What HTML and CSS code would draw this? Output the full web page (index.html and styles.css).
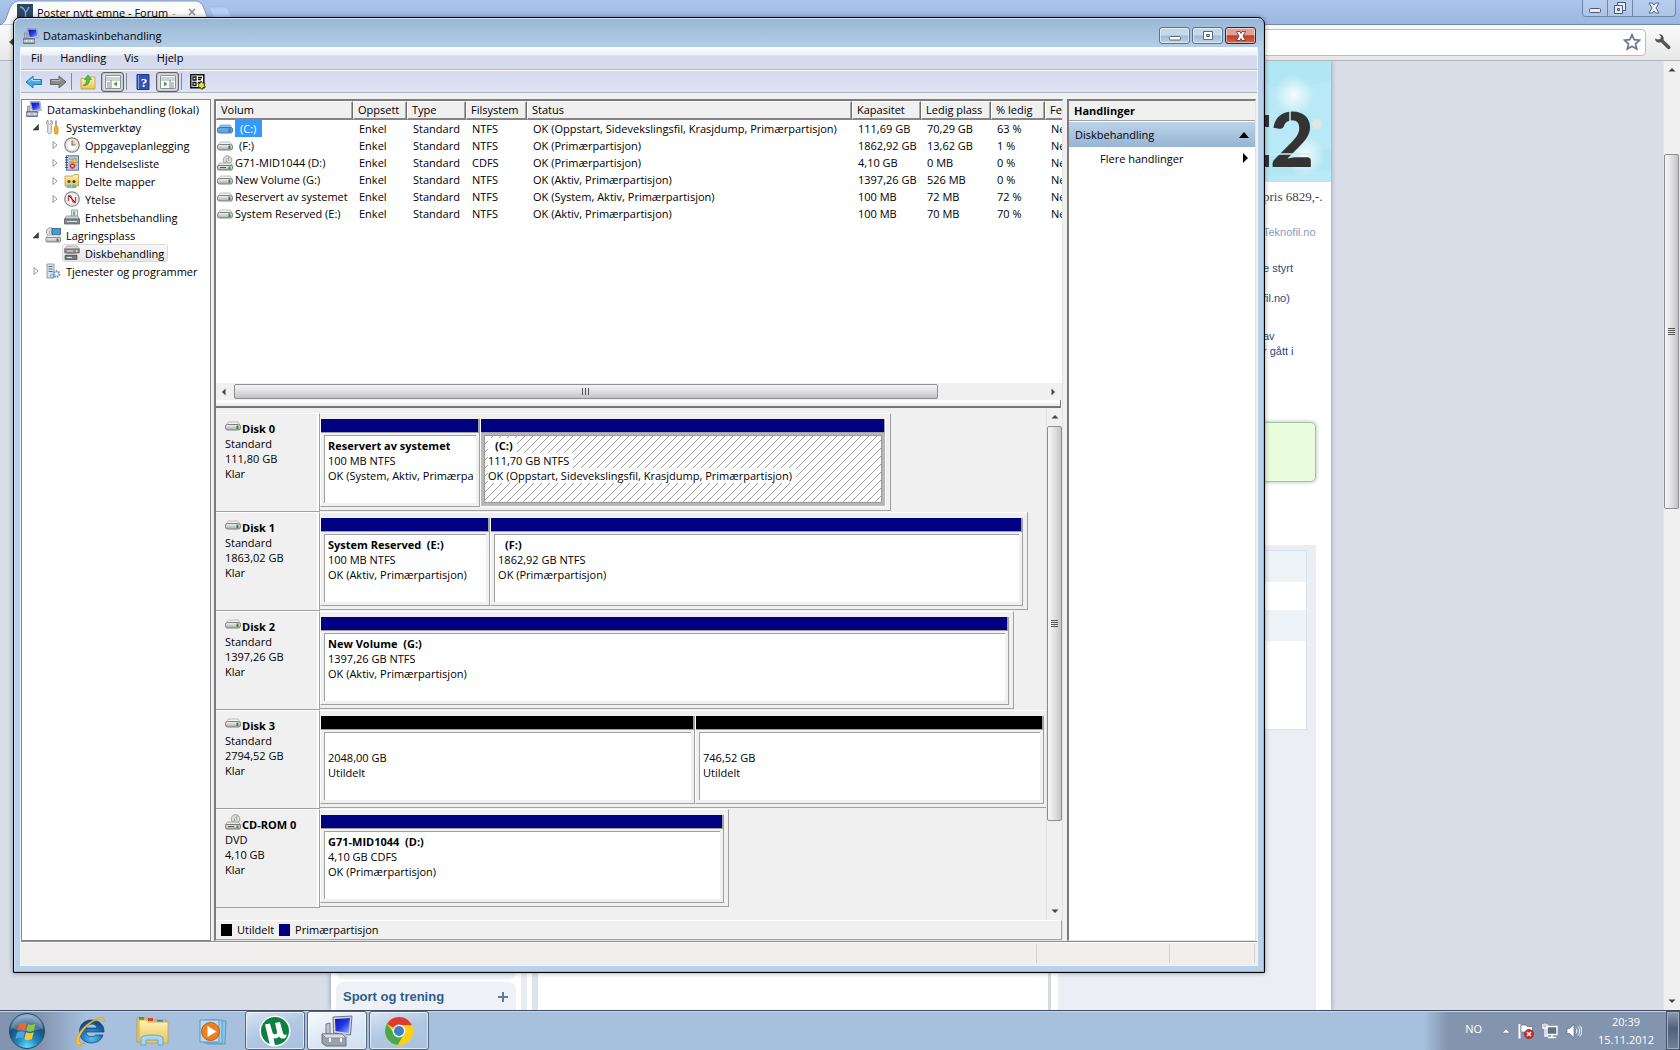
FILE: index.html
```html
<!DOCTYPE html>
<html lang="no">
<head>
    <meta charset="UTF-8">
    <meta name="viewport" content="width=device-width, initial-scale=1.0">
    <title>Datamaskinbehandling</title>
    <link rel="stylesheet" href="styles.css">
</head>
<body>

<!-- shared icons -->
<svg class="sprite" aria-hidden="true">
    <defs>
        <linearGradient id="g-metal" x1="0" y1="0" x2="0" y2="1"><stop offset="0" stop-color="#f4f4f4"/><stop offset="1" stop-color="#a9a9a9"/></linearGradient>
        <linearGradient id="g-screen" x1="0" y1="0" x2="1" y2="1"><stop offset="0" stop-color="#0a12b8"/><stop offset="0.5" stop-color="#2338e0"/><stop offset="1" stop-color="#9fb4ff"/></linearGradient>
        <linearGradient id="g-folder" x1="0" y1="0" x2="0" y2="1"><stop offset="0" stop-color="#fdf3b5"/><stop offset="1" stop-color="#e9c45c"/></linearGradient>
        <radialGradient id="g-orb" cx="0.5" cy="0.95" r="0.9"><stop offset="0" stop-color="#5fe0fb"/><stop offset="0.35" stop-color="#1d86bd"/><stop offset="0.7" stop-color="#1b4d7d"/><stop offset="1" stop-color="#86a9c6"/></radialGradient>
        <radialGradient id="g-ie" cx="0.5" cy="0.8" r="0.8"><stop offset="0" stop-color="#4fc4f5"/><stop offset="0.6" stop-color="#1668b5"/><stop offset="1" stop-color="#12407e"/></radialGradient>
    </defs>
    <symbol id="i-drive" viewBox="0 0 16 16">
        <path d="M3.500 4h9.500l2.500 4H.5z" fill="#f1f2f3" stroke="#a8a8a8" stroke-width=".7"/>
        <rect x=".5" y="6.500" width="15" height="5.500" rx="2" fill="url(#g-metal)" stroke="#808080"/>
        <path d="M12.500 7.500v3.500" stroke="#2f8c2f" stroke-width="2"/>
    </symbol>
    <symbol id="i-drive-sel" viewBox="0 0 16 16">
        <path d="M3.500 4h9.500l2.500 4H.5z" fill="#8fc0f0" stroke="#5c9ad6" stroke-width=".7"/>
        <rect x=".5" y="6.500" width="15" height="5.500" rx="2" fill="#6aa5de" stroke="#3b77b8"/>
        <path d="M12.500 7.500v3.500" stroke="#2a7a9c" stroke-width="2"/>
    </symbol>
    <symbol id="i-cd" viewBox="0 0 16 16">
        <circle cx="10.500" cy="5" r="4.300" fill="#dcdcdc" stroke="#8f8f8f" stroke-width=".8"/>
        <path d="M10.500 5l2-3.500M10.500 5l-2 3" stroke="#7bb77b" stroke-width="1"/>
        <circle cx="10.500" cy="5" r="1.200" fill="#fff" stroke="#888" stroke-width=".6"/>
        <path d="M2.500 8h11l2 3H.5z" fill="#e9ebec" stroke="#8a8a8a" stroke-width=".7"/>
        <rect x=".5" y="10.500" width="15" height="4.500" rx="1.500" fill="url(#g-metal)" stroke="#777"/>
        <path d="M3 12.500h6" stroke="#555"/><path d="M12.500 11.500v2.500" stroke="#2f9c2f" stroke-width="2"/>
    </symbol>
    <symbol id="i-computer" viewBox="0 0 16 16">
        <path d="M4 .5h10l1.300 9-9 1z" fill="#d9dde3" stroke="#8b93a0" stroke-width=".7"/>
        <path d="M5 1.500h8.300l1 7-7.500.7z" fill="url(#g-screen)"/>
        <path d="M1.500 5h2.500v6H1.500z" fill="#b9bec5" stroke="#6c7480" stroke-width=".6"/>
        <path d="M8 10.500h5v1.500H8z" fill="#bfc5ce"/>
        <path d="M.5 10.500h11v5H.5z" fill="#9aa1a9" stroke="#5d646d" stroke-width=".8"/>
        <path d="M.5 13h11M3.500 12v2M8.500 12v2" stroke="#eee"/>
    </symbol>
    <symbol id="i-tools" viewBox="0 0 16 16">
        <path d="M3 1v3l1.500 1.500L6 4V1c2 1 2 4 .3 5.300V13c0 2.500-3.600 2.500-3.600 0V6.300C1 5 1 2 3 1z" fill="#e6e6e6" stroke="#8c8c8c" stroke-width=".8"/>
        <path d="M11 1.500v6" stroke="#8c8c8c" stroke-width="1.500"/>
        <rect x="9.500" y="7.500" width="3.500" height="7.500" rx="1.200" fill="#f7b52a" stroke="#c47a00" stroke-width=".7"/>
    </symbol>
    <symbol id="i-clock" viewBox="0 0 16 16">
        <circle cx="8" cy="8" r="7.200" fill="#efefef" stroke="#858585" stroke-width="1.300"/>
        <circle cx="8" cy="8" r="5.300" fill="#fff" stroke="#c5c5c5" stroke-width=".6"/>
        <path d="M8 3v5h4v-1A4.500 4.500 0 0 0 8 3z" fill="#f5cf7a"/><path d="M8 3.500V8h3.500" fill="none" stroke="#666" stroke-width="1.100"/>
    </symbol>
    <symbol id="i-event" viewBox="0 0 16 16">
        <rect x="2.500" y=".8" width="12" height="14.400" fill="#b9cdea" stroke="#4d6a95" stroke-width=".9"/>
        <path d="M5 4h8M5 7h8M5 10h8" stroke="#7c98c4"/><path d="M1 2.500h3M1 5h3M1 7.500h3M1 10h3M1 12.500h3" stroke="#555"/>
        <path d="M10.500 2.500l3 5h-6z" fill="#f9cf2b" stroke="#a87a00" stroke-width=".5"/><circle cx="8.500" cy="11" r="2.800" fill="#d82e2e"/>
        <path d="M7.300 9.800l2.400 2.400M9.700 9.800l-2.400 2.400" stroke="#fff" stroke-width=".9"/>
    </symbol>
    <symbol id="i-shared" viewBox="0 0 16 16">
        <path d="M1 3h8l1-1.500h4.500V13H1z" fill="url(#g-folder)" stroke="#bf9a3c" stroke-width=".8"/>
        <circle cx="5" cy="8.500" r="1.600" fill="#6b4a2a"/><path d="M2.500 15c0-5 5-5 5 0z" fill="#6fb9de"/>
        <circle cx="10" cy="8.500" r="1.600" fill="#53361d"/><path d="M7.500 15c0-5 5-5 5 0z" fill="#6fc08a"/>
    </symbol>
    <symbol id="i-perf" viewBox="0 0 16 16">
        <circle cx="8" cy="8" r="7.200" fill="#fff" stroke="#8a8a8a" stroke-width="1.300"/>
        <circle cx="8" cy="8" r="5.300" fill="none" stroke="#cfcfcf" stroke-width=".7"/>
        <path d="M4.500 10V6.500C4.500 4 7 4 7.500 6.500L8.500 9.500C9 12 11.500 12 11.500 9.500V6" fill="none" stroke="#d43a3a" stroke-width="1.400"/><path d="M4.500 4.500l7 7" stroke="#333"/>
    </symbol>
    <symbol id="i-device" viewBox="0 0 16 16">
        <path d="M7.500 1h6v7h-6z" fill="#dfe6e2" stroke="#7e8a86" stroke-width=".7"/><path d="M10 2.500v4" stroke="#3aa657" stroke-width="1.500"/>
        <path d="M2.500 7h11l2 3H.5z" fill="#cfd4d8" stroke="#7a8086" stroke-width=".7"/>
        <path d="M.5 10h15v5H.5z" fill="#7f878f" stroke="#545b62" stroke-width=".8"/><path d="M3 12.500h10" stroke="#d5dade"/>
    </symbol>
    <symbol id="i-storage" viewBox="0 0 16 16">
        <circle cx="5.500" cy="5" r="4.200" fill="#e2e2e2" stroke="#8a8a8a" stroke-width=".8"/><circle cx="5.500" cy="5" r="1.200" fill="#fff" stroke="#777" stroke-width=".6"/>
        <rect x="7" y="1.500" width="8.500" height="6" fill="#3a9fd6" stroke="#285f8a" stroke-width=".8"/>
        <path d="M3 8h11l1.500 2.500H1z" fill="#eee" stroke="#999" stroke-width=".6"/>
        <rect x="1" y="10.500" width="14.500" height="4.500" rx="1" fill="url(#g-metal)" stroke="#777" stroke-width=".8"/><path d="M12.500 11.500v2.500" stroke="#2f9c2f" stroke-width="2"/>
    </symbol>
    <symbol id="i-disks" viewBox="0 0 16 16">
        <path d="M3 1h10l2.500 3H.5z" fill="#ddd" stroke="#888" stroke-width=".6"/><path d="M.7 4h14.600v4H.7z" fill="#8c8c8c" stroke="#5c5c5c" stroke-width=".7"/>
        <path d="M3.500 8.500h8l1.500 2H2z" fill="#ccc" stroke="#777" stroke-width=".6"/><path d="M1 10.500h12v4H1z" fill="#777" stroke="#4c4c4c" stroke-width=".7"/>
        <path d="M3 6h6M3 12.500h5" stroke="#e8e8e8"/><path d="M12.500 5v2" stroke="#d5e87a" stroke-width="1.500"/>
    </symbol>
    <symbol id="i-services" viewBox="0 0 16 16">
        <path d="M2 1h7v14H2z" fill="#dbe2e8" stroke="#7f8c98" stroke-width=".8"/><path d="M3.500 3.500h4M3.500 6h4M3.500 8.500h4" stroke="#5f6d79"/>
        <circle cx="11.500" cy="11" r="3" fill="#c5dcf0" stroke="#6d97bf" stroke-width="1.800" stroke-dasharray="1.600 1"/><circle cx="11.500" cy="11" r="1" fill="#fff"/>
        <circle cx="7" cy="13" r="1.700" fill="#c5dcf0" stroke="#6d97bf" stroke-width="1.200" stroke-dasharray="1 .7"/>
    </symbol>
    <symbol id="i-open" viewBox="0 0 8 8"><path d="M6.500 1.500v5.500h-5.500z" fill="#404040" stroke="#222" stroke-width=".5"/></symbol>
    <symbol id="i-closed" viewBox="0 0 8 8"><path d="M2 .5v7L6 4z" fill="#fff" stroke="#8a8a8a" stroke-width=".9"/></symbol>
    <symbol id="i-up" viewBox="0 0 8 8"><path d="M4 2l3.500 3.500h-7z" fill="#444"/></symbol>
    <symbol id="i-down" viewBox="0 0 8 8"><path d="M4 6l3.500-3.500h-7z" fill="#444"/></symbol>
    <symbol id="i-left" viewBox="0 0 8 8"><path d="M2 4l3.500-3.500v7z" fill="#444"/></symbol>
    <symbol id="i-right" viewBox="0 0 8 8"><path d="M6 4L2.500.5v7z" fill="#444"/></symbol>
</svg>

<div class="desktop">

    <!-- browser behind -->
    <div class="browser">
        <div class="tabstrip">
            <svg class="tab-shape" width="250" height="25" viewBox="0 0 250 25">
                <path d="M0 25c5-2 6-6 8-12 3-8 5-11 10-12h178c6 1 7 5 9 10 3 9 5 12 11 14z" fill="#fbfbfc" stroke="#6d86ad" stroke-width=".8"/>
                <path d="M209 7h16c4 0 5 10 8 12h-17c-3-1-5-8-7-12z" fill="#b4d0f6" stroke="#9fbde8"/>
            </svg>
            <div class="tab">
                <svg width="16" height="16" viewBox="0 0 16 16"><path d="M0 0h16v16H0z" fill="#2b4768"/><path d="M3 3c2 0 4 2 5 4s2 0 4-4M8.500 7v6" fill="none" stroke="#8ea5be" stroke-width="1.500"/></svg>
                <span>Poster nytt emne - Forum</span><span class="tab-more">-</span>
                <svg width="8" height="8" viewBox="0 0 8 8"><path d="M1 1l6 6M7 1L1 7" stroke="#8b8b8b" stroke-width="1.500"/></svg>
            </div>
            <div class="browser-buttons">
                <button type="button" aria-label="Minimer"><svg width="14" height="14" viewBox="0 0 14 14"><rect x="1.500" y="7.500" width="11" height="4" rx="1" fill="#e8eef8" stroke="#4b5a78"/></svg></button>
                <button type="button" aria-label="Gjenopprett"><svg width="14" height="14" viewBox="0 0 14 14"><path d="M4.500 1.500h8v8h-8z" fill="#e8eef8" stroke="#4b5a78"/><path d="M1.500 4.500h8v8h-8z" fill="#e8eef8" stroke="#4b5a78"/><path d="M4.500 7.500h2v2h-2z" fill="#9db5de" stroke="#4b5a78"/></svg></button>
                <button type="button" aria-label="Lukk"><svg width="14" height="14" viewBox="0 0 14 14"><path d="M2 2h3.500L7 4l1.500-2H12L9 7l3 5H8.500L7 10l-1.500 2H2l3-5z" fill="#e8eef8" stroke="#4b5a78" stroke-width=".9"/></svg></button>
            </div>
        </div>
        <div class="navbar">
            <svg width="14" height="14" viewBox="0 0 14 14"><path d="M14 1v12L7 7z" fill="#444"/></svg>
            <div class="address">
                <input type="text" aria-label="Adresse">
                <svg width="18" height="18" viewBox="0 0 18 18"><path d="M9 1.800l2.200 4.900 5.300.5-4 3.600 1.200 5.300L9 13.300l-4.700 2.800 1.200-5.300-4-3.600 5.300-.5z" fill="#fff" stroke="#6b7590" stroke-width="1.700"/></svg>
            </div>
            <svg width="18" height="18" viewBox="0 0 18 18"><path d="M1 5.500C1 8.500 4 10.500 7 9.300l6.500 6.500c1.800 1.200 4-.8 2.600-2.600L9.500 7C10.500 3.500 8 .8 4.800 1.200L7 3.500 6.300 6 3.800 6.500z" fill="#555"/></svg>
        </div>
        <div class="viewport">
            <div class="site">
                <div class="site-nav">
                    <div class="nav-box nav-box-cut"></div>
                    <div class="nav-box"><a href="#">Sport og trening</a><svg width="12" height="12" viewBox="0 0 12 12"><path d="M6 1v10M1 6h10" stroke="#5f7d9c" stroke-width="2"/></svg></div>
                </div>
                <div class="site-main"></div>
                <div class="site-aside">
                    <svg class="banner" viewBox="0 0 273 121" preserveAspectRatio="xMaxYMid slice">
                        <defs><radialGradient id="g-glow"><stop offset="0" stop-color="#f4fcfd"/><stop offset="1" stop-color="#f4fcfd" stop-opacity="0"/></radialGradient></defs>
                        <path d="M0 0h273v121H0z" fill="#b9e9f6"/>
                        <path d="M200 0h73v20l-40 8-33-6zM210 95l63-8v22l-63 6z" fill="#a5e0f1" opacity=".4"/>
                        <circle cx="236" cy="34" r="20" fill="url(#g-glow)"/><circle cx="247" cy="95" r="20" fill="url(#g-glow)"/>
                        <circle cx="259" cy="63" r="5" fill="#dfe6e2"/>
                        <path d="M200 54h11v12h-11zM200 94h11v12h-11z" fill="#333"/>
                        <text x="212" y="106" class="banner-text">2</text>
                        <path d="M232 48v14M212 93h40" stroke="#c6eef8" stroke-width="1.500"/>
                    </svg>
                    <div class="aside-text">
                        <p class="price">pris 6829,-.</p>
                        <p class="source">Teknofil.no</p>
                        <p class="news"><a href="#">e styrt</a></p>
                        <p class="news"><a href="#">fil.no)</a></p>
                        <p class="news news-two"><a href="#">av<br>r gått i</a></p>
                    </div>
                    <div class="notice"></div>
                    <div class="panel">
                        <div class="panel-list"><div class="stripe"></div><div class="plain"></div><div class="stripe"></div></div>
                    </div>
                </div>
            </div>
            <div class="vscroll page-scroll">
                <svg width="8" height="8"><use href="#i-up"/></svg>
                <div class="vtrack"><div class="vthumb"><i></i><i></i><i></i><i></i></div></div>
                <svg width="8" height="8"><use href="#i-down"/></svg>
            </div>
        </div>
    </div>

    <!-- computer management window -->
    <div class="window">
        <div class="titlebar">
            <svg width="16" height="16"><use href="#i-computer"/></svg>
            <h1>Datamaskinbehandling</h1>
            <div class="window-buttons">
                <button type="button" aria-label="Minimer"><svg width="14" height="12" viewBox="0 0 14 12"><rect x="1.500" y="6.500" width="11" height="3.500" rx="1" fill="#fff" stroke="#5a6878"/></svg></button>
                <button type="button" aria-label="Maksimer"><svg width="14" height="12" viewBox="0 0 14 12"><path d="M2.500 1.500h9v8h-9z" fill="#fff" stroke="#5a6878"/><path d="M5.500 4.500h3v2h-3z" fill="#a9c3dd" stroke="#5a6878"/></svg></button>
                <button type="button" class="close" aria-label="Lukk"><svg width="14" height="12" viewBox="0 0 14 12"><path d="M2.500 1.500H6l1 2 1-2h3.500L9 6l2.500 4.500H8l-1-2-1 2H2.500L5 6z" fill="#fff" stroke="#5c3033" stroke-width=".8"/></svg></button>
            </div>
        </div>

        <div class="client">
            <nav class="menubar">
                <button type="button">Fil</button>
                <button type="button">Handling</button>
                <button type="button">Vis</button>
                <button type="button">Hjelp</button>
            </nav>

            <div class="toolbar">
                <button type="button" aria-label="Tilbake"><svg width="18" height="16" viewBox="0 0 18 16"><path d="M1 8l7-6v3.500h8.500v5H8V14z" fill="#3fb0e8" stroke="#1f6ea8" stroke-width=".9"/><path d="M4 7.500l3.500-3v2H15" fill="none" stroke="#a8e0fa"/></svg></button>
                <button type="button" aria-label="Frem"><svg width="18" height="16" viewBox="0 0 18 16"><path d="M17 8l-7-6v3.500H1.500v5H10V14z" fill="#8b8b8b" stroke="#5c5c5c" stroke-width=".9"/><path d="M3 6.500h8v-2" fill="none" stroke="#bbb"/></svg></button>
                <span class="sep"></span>
                <button type="button" aria-label="Opp ett nivå"><svg width="18" height="16" viewBox="0 0 18 16"><path d="M2 4.500h7l1-1.500h6v12H2z" fill="url(#g-folder)" stroke="#c19a3f" stroke-width=".8"/><path d="M4 11.500c3-1 3.500-3 3.500-6H5.500L9 1l3.500 4.500h-2c0 4-2 6-6.500 6z" fill="#52c13a" stroke="#2c8a1b" stroke-width=".6"/></svg></button>
                <button type="button" class="pressed" aria-label="Vis/skjul konsolltre"><svg width="16" height="14" viewBox="0 0 16 14"><path d="M.5.5h15v13H.5z" fill="#fff" stroke="#8a909a"/><path d="M1 3h14M1 5h14" stroke="#9aa4b4"/><path d="M6 5v8M2 8h3M2 10h3M2 12h3" stroke="#7d8794"/><path d="M12 6.500v5L8.500 9z" fill="#3ea83a"/></svg></button>
                <span class="sep"></span>
                <button type="button" aria-label="Hjelp"><svg width="18" height="16" viewBox="0 0 18 16"><path d="M3 .5h12v15H3z" fill="#3353b5" stroke="#223a86"/><path d="M4.500 1v14" stroke="#8aa0e0"/><text x="10" y="13" class="help-text">?</text></svg></button>
                <button type="button" class="pressed" aria-label="Vis/skjul handlinger"><svg width="16" height="14" viewBox="0 0 16 14"><path d="M.5.5h15v13H.5z" fill="#fff" stroke="#8a909a"/><path d="M1 3h14M1 5h14" stroke="#9aa4b4"/><path d="M10 5v8M11 8h3M11 10h3M11 12h3" stroke="#7d8794"/><path d="M4 6.500v5L7.500 9z" fill="#3ea83a"/></svg></button>
                <span class="sep"></span>
                <button type="button" aria-label="Innstillinger"><svg width="16" height="16" viewBox="0 0 16 16"><path d="M.8.8h13v13H.8z" fill="#fff" stroke="#111" stroke-width="1.500"/><path d="M3 3h3v3H3zM3 8.500h3v3H3z" fill="none" stroke="#111" stroke-width="1.300"/><path d="M8 3.500h4M8 5.500h3M8 8.500h4" stroke="#111" stroke-width="1.300"/><path d="M11 7l1.500 2.200L15 9l-1 2.200 1.500 2-2.500.3-1 2-1.700-2L8 13.200l1-2-1.300-2 2.300.1z" fill="#f0e21c" stroke="#111" stroke-width=".7"/></svg></button>
            </div>

            <div class="panes">
                <ul class="tree">
                    <li><a href="#"><svg width="16" height="16"><use href="#i-computer"/></svg>Datamaskinbehandling (lokal)</a></li>
                    <li class="level-1"><svg class="twist"><use href="#i-open"/></svg><a href="#"><svg width="16" height="16"><use href="#i-tools"/></svg>Systemverktøy</a></li>
                    <li class="level-2"><svg class="twist"><use href="#i-closed"/></svg><a href="#"><svg width="16" height="16"><use href="#i-clock"/></svg>Oppgaveplanlegging</a></li>
                    <li class="level-2"><svg class="twist"><use href="#i-closed"/></svg><a href="#"><svg width="16" height="16"><use href="#i-event"/></svg>Hendelsesliste</a></li>
                    <li class="level-2"><svg class="twist"><use href="#i-closed"/></svg><a href="#"><svg width="16" height="16"><use href="#i-shared"/></svg>Delte mapper</a></li>
                    <li class="level-2"><svg class="twist"><use href="#i-closed"/></svg><a href="#"><svg width="16" height="16"><use href="#i-perf"/></svg>Ytelse</a></li>
                    <li class="level-2"><span class="twist"></span><a href="#"><svg width="16" height="16"><use href="#i-device"/></svg>Enhetsbehandling</a></li>
                    <li class="level-1"><svg class="twist"><use href="#i-open"/></svg><a href="#"><svg width="16" height="16"><use href="#i-storage"/></svg>Lagringsplass</a></li>
                    <li class="level-2"><span class="twist"></span><a href="#" class="selected"><svg width="16" height="16"><use href="#i-disks"/></svg>Diskbehandling</a></li>
                    <li class="level-1"><svg class="twist"><use href="#i-closed"/></svg><a href="#"><svg width="16" height="16"><use href="#i-services"/></svg>Tjenester og programmer</a></li>
                </ul>

                <div class="center">
                    <div class="volumes">
                        <table>
                            <colgroup><col class="c-volum"><col class="c-oppsett"><col class="c-type"><col class="c-fs"><col class="c-status"><col class="c-kap"><col class="c-ledig"><col class="c-pst"><col class="c-feil"></colgroup>
                            <thead>
                                <tr><th>Volum</th><th>Oppsett</th><th>Type</th><th>Filsystem</th><th>Status</th><th>Kapasitet</th><th>Ledig plass</th><th>% ledig</th><th>Feil</th></tr>
                            </thead>
                            <tbody>
                                <tr><td><div class="vol"><svg width="16" height="16"><use href="#i-drive-sel"/></svg><span class="vol-selected">(C:)</span></div></td><td>Enkel</td><td>Standard</td><td>NTFS</td><td>OK (Oppstart, Sidevekslingsfil, Krasjdump, Primærpartisjon)</td><td>111,69 GB</td><td>70,29 GB</td><td>63 %</td><td>Nei</td></tr>
                                <tr><td><div class="vol"><svg width="16" height="16"><use href="#i-drive"/></svg><span class="vol-unnamed">(F:)</span></div></td><td>Enkel</td><td>Standard</td><td>NTFS</td><td>OK (Primærpartisjon)</td><td>1862,92 GB</td><td>13,62 GB</td><td>1 %</td><td>Nei</td></tr>
                                <tr><td><div class="vol"><svg width="16" height="16"><use href="#i-cd"/></svg><span>G71-MID1044 (D:)</span></div></td><td>Enkel</td><td>Standard</td><td>CDFS</td><td>OK (Primærpartisjon)</td><td>4,10 GB</td><td>0 MB</td><td>0 %</td><td>Nei</td></tr>
                                <tr><td><div class="vol"><svg width="16" height="16"><use href="#i-drive"/></svg><span>New Volume (G:)</span></div></td><td>Enkel</td><td>Standard</td><td>NTFS</td><td>OK (Aktiv, Primærpartisjon)</td><td>1397,26 GB</td><td>526 MB</td><td>0 %</td><td>Nei</td></tr>
                                <tr><td><div class="vol"><svg width="16" height="16"><use href="#i-drive"/></svg><span>Reservert av systemet</span></div></td><td>Enkel</td><td>Standard</td><td>NTFS</td><td>OK (System, Aktiv, Primærpartisjon)</td><td>100 MB</td><td>72 MB</td><td>72 %</td><td>Nei</td></tr>
                                <tr><td><div class="vol"><svg width="16" height="16"><use href="#i-drive"/></svg><span>System Reserved (E:)</span></div></td><td>Enkel</td><td>Standard</td><td>NTFS</td><td>OK (Aktiv, Primærpartisjon)</td><td>100 MB</td><td>70 MB</td><td>70 %</td><td>Nei</td></tr>
                            </tbody>
                        </table>
                    </div>
                    <div class="hscroll">
                        <svg width="8" height="8"><use href="#i-left"/></svg>
                        <div class="htrack"><div class="hthumb"><i></i><i></i><i></i></div></div>
                        <svg width="8" height="8"><use href="#i-right"/></svg>
                    </div>
                    <div class="splitter"></div>

                    <div class="disks-area">
                        <div class="disks">
                            <div class="disk">
                                <div class="disk-label">
                                    <h2><svg width="16" height="16"><use href="#i-drive"/></svg>Disk 0</h2>
                                    <p>Standard<br>111,80 GB<br>Klar</p>
                                </div>
                                <div class="disk-track">
                                    <div class="disk-parts" style="width: 78.6%">
                                        <div class="part" style="width: 28.3%"><div class="bar primary"></div><div class="part-body"><strong>Reservert av systemet</strong><span>100 MB NTFS</span><span>OK (System, Aktiv, Primærpartisjon)</span></div></div>
                                        <div class="part chosen" style="width: 71.7%"><div class="bar primary"></div><div class="part-body"><strong class="unnamed">(C:)</strong><span>111,70 GB NTFS</span><span>OK (Oppstart, Sidevekslingsfil, Krasjdump, Primærpartisjon)</span></div></div>
                                    </div>
                                </div>
                            </div>
                            <div class="disk">
                                <div class="disk-label">
                                    <h2><svg width="16" height="16"><use href="#i-drive"/></svg>Disk 1</h2>
                                    <p>Standard<br>1863,02 GB<br>Klar</p>
                                </div>
                                <div class="disk-track">
                                    <div class="disk-parts" style="width: 97.5%">
                                        <div class="part" style="width: 24.2%"><div class="bar primary"></div><div class="part-body"><strong>System Reserved&nbsp; (E:)</strong><span>100 MB NTFS</span><span>OK (Aktiv, Primærpartisjon)</span></div></div>
                                        <div class="part" style="width: 75.8%"><div class="bar primary"></div><div class="part-body"><strong class="unnamed">(F:)</strong><span>1862,92 GB NTFS</span><span>OK (Primærpartisjon)</span></div></div>
                                    </div>
                                </div>
                            </div>
                            <div class="disk">
                                <div class="disk-label">
                                    <h2><svg width="16" height="16"><use href="#i-drive"/></svg>Disk 2</h2>
                                    <p>Standard<br>1397,26 GB<br>Klar</p>
                                </div>
                                <div class="disk-track">
                                    <div class="disk-parts" style="width: 95.6%">
                                        <div class="part" style="width: 100%"><div class="bar primary"></div><div class="part-body"><strong>New Volume&nbsp; (G:)</strong><span>1397,26 GB NTFS</span><span>OK (Aktiv, Primærpartisjon)</span></div></div>
                                    </div>
                                </div>
                            </div>
                            <div class="disk">
                                <div class="disk-label">
                                    <h2><svg width="16" height="16"><use href="#i-drive"/></svg>Disk 3</h2>
                                    <p>Standard<br>2794,52 GB<br>Klar</p>
                                </div>
                                <div class="disk-track">
                                    <div class="disk-parts disk-full" style="width: 100%">
                                        <div class="part" style="width: 51.8%"><div class="bar"></div><div class="part-body"><strong>&nbsp;</strong><span>2048,00 GB</span><span>Utildelt</span></div></div>
                                        <div class="part" style="width: 48.2%"><div class="bar"></div><div class="part-body"><strong>&nbsp;</strong><span>746,52 GB</span><span>Utildelt</span></div></div>
                                    </div>
                                </div>
                            </div>
                            <div class="disk">
                                <div class="disk-label">
                                    <h2><svg width="16" height="16"><use href="#i-cd"/></svg>CD-ROM 0</h2>
                                    <p>DVD<br>4,10 GB<br>Klar</p>
                                </div>
                                <div class="disk-track">
                                    <div class="disk-parts" style="width: 56.4%">
                                        <div class="part" style="width: 100%"><div class="bar primary"></div><div class="part-body"><strong>G71-MID1044&nbsp; (D:)</strong><span>4,10 GB CDFS</span><span>OK (Primærpartisjon)</span></div></div>
                                    </div>
                                </div>
                            </div>
                        </div>
                        <div class="vscroll disk-scroll">
                            <svg width="8" height="8"><use href="#i-up"/></svg>
                            <div class="vtrack"><div class="vthumb"><i></i><i></i><i></i><i></i></div></div>
                            <svg width="8" height="8"><use href="#i-down"/></svg>
                        </div>
                    </div>
                    <div class="legend"><i></i><span>Utildelt</span><i class="primary"></i><span>Primærpartisjon</span></div>
                </div>

                <div class="actions">
                    <h2>Handlinger</h2>
                    <button type="button" class="actions-group">Diskbehandling<svg width="10" height="10" viewBox="0 0 10 10"><path d="M5 2l5 6H0z"/></svg></button>
                    <button type="button" class="actions-item">Flere handlinger<svg width="10" height="10" viewBox="0 0 10 10"><path d="M4 0l5 5-5 5z"/></svg></button>
                </div>
            </div>

            <div class="statusbar"><span></span><span></span><span></span></div>
        </div>
    </div>

    <!-- taskbar -->
    <div class="taskbar">
        <button type="button" class="start" aria-label="Start">
            <svg width="38" height="38" viewBox="0 0 38 38"><circle cx="19" cy="19" r="17.500" fill="url(#g-orb)" stroke="#2a4767"/><path d="M3 16a16.500 16.500 0 0 1 32 0c-9 4-23 4-32 0z" fill="#fff" opacity=".22"/>
                <path d="M11 12c3-2 5-1.500 7.500-.5l-1.500 7c-3-1.200-5-1-7.500.5z" fill="#f0652b"/><path d="M20 12c3 1.500 5 1 7.500-.5L26 18.500c-2.500 1.500-4.500 1.500-7.500.2z" fill="#8cc63f"/>
                <path d="M9 20.500c3-1.500 5-1.700 7.700-.5l-1.500 6.500c-3-1.300-5-.8-7.700.5z" fill="#4aa5e0"/><path d="M18 20.300c3 1.300 5 1.200 7.700-.3L24 27c-3 1.500-5 1.500-7.600.2z" fill="#fbc72d"/></svg>
        </button>
        <button type="button" class="pin" aria-label="Internet Explorer">
            <svg width="34" height="34" viewBox="0 0 34 34"><path d="M31 18H13c.4 5 7 6 9.500 3h7.500c-1.500 5-6 8-11.500 8C11 29 6.500 24 6.500 17.500S11 6 18.500 6C26 6 31.500 11 31 18zM13 14h11c-.5-5-10-5.500-11 0z" fill="url(#g-ie)" stroke="#123a70" stroke-width=".7"/><path d="M31 8c1-4-2-6-8-3C13 9 4 19 3 27c-.5 5 4 5 9 2-3 1-6 .5-6-3C7 19 15 9 24 6c4-1.200 6-.5 7 2z" fill="#f6c83a" stroke="#c18d14" stroke-width=".5"/></svg>
        </button>
        <button type="button" class="pin" aria-label="Windows Utforsker">
            <svg width="34" height="34" viewBox="0 0 34 34"><path d="M2 4h9l2 2h18v22H2z" fill="#e8cd6d" stroke="#b99a3e" stroke-width=".8"/><path d="M4 3h5v3H4z" fill="#3aa33a"/><path d="M13 4h5v3h-5z" fill="#d9432f"/><path d="M22 6h6v3h-6z" fill="#3a7fd0"/><path d="M4 6h7l2 2h20v21H4z" fill="url(#g-folder)" stroke="#c5a548" stroke-width=".8"/><path d="M6 31v-7c0-4 22-4 22 0v7h-5v-5H11v5z" fill="#a5d8f0" stroke="#5ea3c9" stroke-width=".9"/></svg>
        </button>
        <button type="button" class="pin" aria-label="Windows Media Player">
            <svg width="34" height="34" viewBox="0 0 34 34"><path d="M10 7h19l-1 23H10z" fill="#8cc3e0" stroke="#5a9bc0"/><path d="M7 6h18v23H7z" fill="#a5d3ea" stroke="#5a9bc0"/><path d="M3 6h19v22H3z" fill="#b7dcee" stroke="#5a9bc0"/><circle cx="13.500" cy="17.500" r="9" fill="#f07f1e" stroke="#c75b0c"/><path d="M10.500 12v11l9-5.500z" fill="#fff"/></svg>
        </button>
        <button type="button" class="task" aria-label="uTorrent">
            <svg width="32" height="32" viewBox="0 0 32 32"><circle cx="16" cy="16" r="15.500" fill="#fff"/><circle cx="16" cy="16" r="14" fill="#0b8043"/><path d="M6 9.500l5-1 2.500 9c.8 2.800 5 2.300 4.500-.8L16 8l5-1 3 11c.5 1.800 2 2.300 4 1.500l-1.500 3.500c-3 1.200-5.500.3-6.500-1.500-1.300 2-4 2.500-5.500 1.500l1.500 7-5 .5z" fill="#fff"/></svg>
        </button>
        <button type="button" class="task task-active" aria-label="Datamaskinbehandling">
            <svg width="34" height="34" viewBox="0 0 34 34"><path d="M13 3l19-1-1.500 19-17-2z" fill="#cfd5dd" stroke="#6b7480"/><path d="M15 5l15-1-1.300 15L15.500 17z" fill="url(#g-screen)"/><path d="M6 10l4-1v11H6z" fill="#c3c8cf" stroke="#717984"/><path d="M19 19l7 1 2 4h-8z" fill="#b9c0c9"/><path d="M2 20h20l4 4v8H6l-4-3z" fill="#9aa1aa" stroke="#6a727c"/><path d="M2 20h20l4 4H6z" fill="#dadee3" stroke="#6b7480" stroke-width=".7"/><path d="M10 24v4M21 24v4" stroke="#f5f5f5" stroke-width="2"/></svg>
        </button>
        <button type="button" class="task" aria-label="Google Chrome">
            <svg width="32" height="32" viewBox="0 0 32 32"><circle cx="16" cy="16" r="14" fill="#fbd116"/><path d="M16 16L4 9a14 14 0 0 1 24.500.5L29 10H16z" fill="#dd3a30"/><path d="M3.900 9A14 14 0 0 0 15 30l6-11-9 .5z" fill="#4aa84c"/><path d="M16 10h13a14 14 0 0 1-14 20l6-11z" fill="#fbd116"/><circle cx="16" cy="16" r="6.500" fill="#f4f4f4"/><circle cx="16" cy="16" r="5" fill="#3f7fc4"/></svg>
        </button>
        <div class="tray">
            <span class="lang">NO</span>
            <svg width="8" height="8" viewBox="0 0 8 8"><path d="M4 2l4 4H0z" fill="#fff" stroke="#5b6a80" stroke-width=".5"/></svg>
            <svg width="16" height="16" viewBox="0 0 16 16"><path d="M1.500 1v14.500" stroke="#fff" stroke-width="2"/><path d="M3 2h5l1 1.500h5.500v7H9L8 9H3z" fill="#fff" stroke="#4d5a6d" stroke-width=".6"/><circle cx="11" cy="11" r="4.500" fill="#d5261f" stroke="#8d100b" stroke-width=".6"/><path d="M9 9l4 4M13 9l-4 4" stroke="#fff" stroke-width="1.500"/></svg>
            <svg width="16" height="16" viewBox="0 0 16 16"><path d="M5 3.500h10v8H5z" fill="#5d7088" stroke="#fff" stroke-width="1.400"/><path d="M10 12v2M6 14.500h8" stroke="#fff" stroke-width="1.500"/><path d="M1 1v4h4V1M3 .5v3M3 5v8h3" fill="none" stroke="#fff" stroke-width="1.300"/></svg>
            <svg width="16" height="16" viewBox="0 0 16 16"><path d="M1 5.500h2.500L8 1.500v13L3.500 10.500H1z" fill="#fff" stroke="#4d5a6d" stroke-width=".6"/><path d="M10 5.500c1.200 1.500 1.200 3.500 0 5M12 3.500c2.200 2.500 2.200 6.500 0 9M14 2.500c2.300 3 2.300 8 0 11" fill="none" stroke="#fff"/></svg>
            <div class="clock">20:39<br>15.11.2012</div>
            <button type="button" class="peek" aria-label="Vis skrivebord"></button>
        </div>
    </div>
</div>

</body>
</html>
```
FILE: styles.css
```css
* {
    margin: 0;
    padding: 0;
    box-sizing: border-box;
}

body {
    font-family: "Open Sans", "Noto Sans", sans-serif;
    font-size: 11px;
    line-height: 15px;
    color: #000;
}

button {
    font: inherit;
    color: inherit;
    background: none;
    border: none;
}

a {
    color: inherit;
    text-decoration: none;
}

svg {
    display: block;
    flex: none;
}

.sprite {
    position: absolute;
    width: 0;
    height: 0;
}

.desktop {
    position: relative;
    display: flex;
    flex-direction: column;
    height: 100vh;
    overflow: hidden;
    background: #d8dde8;
}

/* browser */
.browser {
    flex: 1;
    min-height: 0;
    display: flex;
    flex-direction: column;
}

.tabstrip {
    position: relative;
    display: flex;
    justify-content: space-between;
    height: 25px;
    background: linear-gradient(#abc5ec, #9db6de);
    border-bottom: 1px solid #7288ae;
}

.tab-shape {
    position: absolute;
    left: 0;
    top: 0;
}

.tab {
    position: relative;
    display: flex;
    align-items: center;
    gap: 4px;
    padding-left: 17px;
}

.tab svg:last-child {
    margin-left: 8px;
}

.tab-more {
    color: #999;
}

.browser-buttons {
    display: flex;
    height: 17px;
    margin-right: 4px;
    border: 1px solid #6e85ab;
    border-top: none;
    border-radius: 0 0 4px 4px;
}

.browser-buttons button {
    display: flex;
    justify-content: center;
    align-items: center;
    width: 25px;
    border-right: 1px solid #6e85ab;
    background: rgba(255, 255, 255, 0.15);
}

.browser-buttons button:last-child {
    width: 42px;
    border-right: none;
}

.navbar {
    display: flex;
    align-items: center;
    gap: 8px;
    height: 36px;
    padding: 0 8px 1px 2px;
    background: linear-gradient(#fbfbfb, #e7e7e7);
    border-bottom: 1px solid #b3b6bb;
}

.address {
    flex: 1;
    display: flex;
    align-items: center;
    height: 27px;
    padding-right: 4px;
    background: #fff;
    border: 1px solid #bcbcbc;
    border-radius: 4px;
}

.address input {
    flex: 1;
    border: none;
    background: none;
}

.viewport {
    flex: 1;
    min-height: 0;
    display: flex;
    justify-content: space-between;
    background: #d8dde8;
}

.site {
    display: flex;
    flex: 1;
    margin: 0 332px 0 331px;
    background: #fff;
    box-shadow: 0 0 5px #8b92a2;
    clip-path: inset(0 -8px);
}

.site-nav {
    display: flex;
    flex-direction: column;
    justify-content: flex-end;
    gap: 3px;
    width: 196px;
    padding: 0 5px;
    border-right: 6px solid #e8edf1;
}

.nav-box {
    display: flex;
    justify-content: space-between;
    align-items: center;
    height: 28px;
    padding: 2px 7px 0;
    background: #eef2f6;
    border-radius: 7px 7px 0 0;
    font: bold 13px/18px "Liberation Sans", Arial, sans-serif;
    color: #2e5c8c;
}

.nav-box-cut {
    border-radius: 0 0 7px 7px;
}

.site-main {
    flex: 1;
    margin: 0 7px 0 5px;
    border-left: 6px solid #dce3ea;
    border-right: 3px solid #d4dce2;
}

.site-aside {
    display: flex;
    flex-direction: column;
    width: 273px;
}

.banner {
    width: 100%;
    height: 121px;
}

.banner-text {
    font: 900 76px "Lato", sans-serif;
    fill: #333;
}

.aside-text {
    height: 240px;
    padding: 6px 0 0 205px;
    white-space: nowrap;
    font-family: "Liberation Sans", Arial, sans-serif;
}

.price {
    font: 13px/18px "Liberation Serif", serif;
    color: #445;
}

.source {
    margin-top: 17px;
    line-height: 18px;
    color: #7fa0bb;
}

.news {
    margin-top: 15px;
    line-height: 15px;
    color: #2c4a80;
}

.source + .news {
    margin-top: 20px;
}

.news-two {
    margin-top: 23px;
}

.notice {
    height: 60px;
    margin-right: 15px;
    background: #e9fcdc;
    border: 1px solid #9fc6a0;
    border-radius: 5px;
    box-shadow: 0 0 4px #b5b5b5;
}

.panel {
    flex: 1;
    margin: 63px 15px 0 0;
    padding: 5px 9px 0;
    background: #ebeff3;
}

.panel-list {
    height: 180px;
    background: #fff;
    border: 1px solid #dae2ec;
}

.stripe {
    height: 31px;
    background: #edf2f6;
}

.plain {
    height: 28px;
}

/* scrollbars */
.vscroll {
    display: flex;
    flex-direction: column;
    align-items: center;
    width: 17px;
    padding: 5px 0;
    gap: 5px;
    background: #f0f0f0;
    border-left: 1px solid #e3e3e3;
}

.vtrack {
    flex: 1;
    width: 100%;
}

.vthumb {
    display: flex;
    flex-direction: column;
    justify-content: center;
    align-items: center;
    gap: 1px;
    width: 15px;
    background: linear-gradient(90deg, #f7f7f7, #e2e2e3 50%, #c3c3c6);
    border: 1px solid #8f8f93;
    border-radius: 2px;
}

.vthumb i {
    width: 7px;
    height: 1px;
    background: #555;
}

.page-scroll .vtrack {
    padding-top: 75px;
}

.page-scroll .vthumb {
    height: 355px;
}

.hscroll {
    display: flex;
    align-items: center;
    height: 17px;
    gap: 6px;
    padding: 0 5px 0 4px;
    background: #f0f0f0;
}

.htrack {
    flex: 1;
}

.hthumb {
    display: flex;
    justify-content: center;
    align-items: center;
    gap: 2px;
    width: 87%;
    height: 15px;
    background: linear-gradient(#f5f5f5, #dedee0 50%, #c2c2c5);
    border: 1px solid #8f8f93;
    border-radius: 2px;
}

.hthumb i {
    width: 1px;
    height: 7px;
    background: #555;
}

/* window */
.window {
    position: absolute;
    top: 17px;
    right: 415px;
    bottom: 77px;
    left: 13px;
    display: flex;
    flex-direction: column;
    padding: 0 6px 6px;
    background: linear-gradient(#98b6d3, #b6cfe8 30px, #bbd2ea 120px, #b9d1ea);
    border: 1px solid #000;
    border-radius: 7px 7px 0 0;
    box-shadow: inset -1px -1px #4fd3ee, inset 1px 1px #c8e4f4, 0 0 5px rgba(0, 0, 0, 0.4);
}

.titlebar {
    display: flex;
    align-items: center;
    height: 29px;
    padding: 6px 2px 0 3px;
    gap: 4px;
}

.titlebar h1 {
    flex: 1;
    font-size: 11px;
    font-weight: normal;
}

.window-buttons {
    display: flex;
    gap: 2px;
}

.window-buttons button {
    display: flex;
    justify-content: center;
    align-items: center;
    width: 31px;
    height: 17px;
    background: linear-gradient(#c5d8ea 48%, #a0bbd6 52%, #bdd3e9);
    border: 1px solid #5a7390;
    border-radius: 3px;
    box-shadow: inset 0 0 0 1px rgba(255, 255, 255, 0.5);
}

.window-buttons .close {
    background: linear-gradient(#e0a092 45%, #bf4026 52%, #d4674d);
    border-color: #571a1a;
}

.client {
    flex: 1;
    min-height: 0;
    display: flex;
    flex-direction: column;
    background: #f0f0f0;
    border: 1px solid #eef4fa;
    border-width: 0 1px 1px;
}

.menubar {
    display: flex;
    height: 23px;
    padding-left: 1px;
    background: linear-gradient(#fff, #eceff8 8px, #d5daed 9px, #d5dbee);
    border-bottom: 1px solid #b0b6c4;
}

.menubar button {
    padding: 0 9px 2px;
}

.toolbar {
    display: flex;
    align-items: center;
    height: 23px;
    padding-left: 2px;
    gap: 2px;
    background: linear-gradient(#d3d9ee, #dfe4f4);
    border-top: 1px solid #fff;
    border-bottom: 1px solid #abb5c6;
}

.toolbar button {
    display: flex;
    justify-content: center;
    align-items: center;
    width: 22px;
    height: 20px;
}

.toolbar .pressed {
    width: 23px;
    background: #dfe1e6;
    border: 1px solid #62656d;
    border-radius: 3px;
    box-shadow: inset 0 0 2px #777;
}

.sep {
    width: 1px;
    height: 17px;
    margin-right: 3px;
    background: #84888f;
}

.help-text {
    font: bold 13px "Liberation Serif", serif;
    fill: #fff;
    text-anchor: middle;
}

.panes {
    flex: 1;
    min-height: 0;
    display: flex;
    gap: 4px;
    padding-top: 6px;
}

.tree {
    width: 190px;
    background: #fff;
    border: 1px solid #828790;
    list-style: none;
    white-space: nowrap;
}

.tree li {
    display: flex;
    align-items: center;
    height: 18px;
    padding-left: 3px;
}

.tree a {
    display: flex;
    align-items: center;
    gap: 5px;
    height: 18px;
    padding: 0 3px 0 1px;
}

.tree .level-1 {
    padding-left: 10px;
}

.tree .level-2 {
    padding-left: 29px;
}

.twist {
    width: 8px;
    height: 8px;
    margin-right: 4px;
}

.tree .selected {
    background: linear-gradient(#f8f8f8, #e6e6e6);
    box-shadow: 0 0 0 1px #dadada;
    border-radius: 2px;
    height: 16px;
}

/* volume list and disks */
.center {
    flex: 1;
    min-width: 0;
    display: flex;
    flex-direction: column;
    margin-left: -1px;
    background: #fff;
    border: 1px solid #e3e3e3;
    border-top: 2px solid #7c7c7c;
    border-left: 2px solid #7c7c7c;
}

.volumes {
    height: 282px;
    overflow: hidden;
}

table {
    width: 940px;
    table-layout: fixed;
    border-collapse: separate;
    border-spacing: 0;
}

.c-volum { width: 137px; }
.c-oppsett { width: 54px; }
.c-type { width: 59px; }
.c-fs { width: 61px; }
.c-status { width: 325px; }
.c-kap { width: 69px; }
.c-ledig { width: 70px; }
.c-pst { width: 54px; }

th {
    height: 19px;
    padding: 0 0 1px 4px;
    text-align: left;
    font-weight: normal;
    background: #f0f0f0;
    border: 1px solid #fff;
    border-right: 1px solid #6e6e6e;
    border-bottom: 2px solid #858585;
    box-shadow: inset -1px 0 #a8a8a8;
}

td {
    height: 17px;
    padding-left: 6px;
    white-space: nowrap;
}

td:first-child {
    padding-left: 1px;
}

.vol {
    display: flex;
    align-items: center;
    height: 17px;
    gap: 2px;
}

.vol-selected {
    height: 17px;
    padding: 1px 6px 1px 5px;
    background: #3399ff;
    color: #fff;
}

.vol-unnamed {
    padding-left: 4px;
}

.splitter {
    height: 8px;
    margin-right: 1px;
    background: #f0f0f0;
    border: 1px solid #747474;
    border-width: 0 1px 2px 0;
    box-shadow: inset 0 3px #fff;
}

.disks-area {
    flex: 1;
    min-height: 0;
    display: flex;
    background: #f0f0f0;
}

.disks {
    flex: 1;
    min-width: 0;
    padding-top: 5px;
    overflow: hidden;
}

.disk {
    display: flex;
    height: 99px;
}

.disk-label {
    width: 104px;
    padding: 6px 0 0 9px;
    border-top: 1px solid #fff;
    border-right: 1px solid #a0a0a0;
    border-bottom: 1px solid #a0a0a0;
    box-shadow: inset -2px 0 #fff;
}

.disk-label h2 {
    display: flex;
    align-items: center;
    height: 16px;
    gap: 1px;
    font-size: 11px;
}

.disk-label h2 svg {
    margin-bottom: 4px;
}

.disk-track {
    flex: 1;
    min-width: 0;
}

.disk-parts {
    display: flex;
    height: 98px;
    padding: 5px 4px 3px 0;
    border-top: 1px solid #fff;
    border-right: 1px solid #a0a0a0;
    border-bottom: 1px solid #a0a0a0;
}

.disk-full {
    padding-right: 2px;
    border-right: none;
}

.part {
    display: flex;
    flex-direction: column;
    border-left: 1px solid #fff;
    border-right: 1px solid #a0a0a0;
    border-bottom: 1px solid #a0a0a0;
}

.bar {
    height: 14px;
    background: #000;
    border-right: 1px solid #a0a0a0;
    border-bottom: 1px solid #a0a0a0;
}

.primary {
    background: #000080;
}

.part-body {
    flex: 1;
    min-height: 0;
    display: flex;
    flex-direction: column;
    align-items: flex-start;
    margin: 2px 3px 3px;
    padding: 2px 3px 0;
    background: #fff;
    border-top: 1px solid #a0a0a0;
    border-left: 1px solid #a0a0a0;
    white-space: nowrap;
    overflow: hidden;
}

.part-body span,
.part-body strong {
    max-width: 100%;
    overflow: hidden;
}

.part-body .unnamed {
    padding-left: 7px;
}

.chosen {
    border-color: #fff;
    background: #b8b8b8;
}

.chosen .part-body {
    border: 1px solid #9a9a9a;
    background: linear-gradient(135deg, transparent 46%, #a0a0a0 48%, #a0a0a0 52%, transparent 54%) 0 0 / 8px 8px #fff;
}

.chosen span,
.chosen strong {
    padding-right: 4px;
    background: #fff;
}

.disk-scroll {
    width: 16px;
}

.disk-scroll .vthumb {
    height: 83%;
}

.legend {
    display: flex;
    align-items: center;
    height: 20px;
    padding: 0 0 1px 5px;
    gap: 5px;
    background: #f0f0f0;
    border: 1px solid #a0a0a0;
    border-width: 1px 1px 1px 0;
    border-top-color: #fff;
}

.legend i {
    width: 11px;
    height: 12px;
    background: #000;
}

.legend .primary {
    background: #000080;
}

/* actions */
.actions {
    width: 189px;
    margin-right: 1px;
    background: #fff;
    border: 1px solid #e3e3e3;
    border-top: 2px solid #7c7c7c;
    border-left: 2px solid #7c7c7c;
}

.actions h2 {
    height: 20px;
    padding: 2px 5px;
    font-size: 11px;
    background: #f0f0f0;
    border-bottom: 1px solid #a0a0a0;
}

.actions button {
    display: flex;
    justify-content: space-between;
    align-items: center;
    width: 100%;
    height: 25px;
    padding: 0 6px;
}

.actions .actions-group {
    margin-top: 1px;
    background: linear-gradient(#bcd3eb, #98b4d3);
}

.actions .actions-item {
    height: 22px;
    padding-left: 31px;
}

.statusbar {
    display: flex;
    height: 24px;
    padding: 2px 2px 2px 0;
    background: #f0edec;
    border-top: 1px solid #8c8c8c;
    box-shadow: inset 0 1px #fff;
}

.statusbar span {
    width: 133px;
    border-right: 1px solid #d4d1d0;
}

.statusbar span:first-child {
    flex: 1;
}

.statusbar span:last-child {
    width: 85px;
}

/* taskbar */
.taskbar {
    display: flex;
    align-items: center;
    height: 40px;
    padding-left: 8px;
    background: linear-gradient(90deg, #8294ae, #8294ae 40px, rgba(130, 148, 174, 0) 86px, rgba(130, 148, 174, 0) calc(100% - 256px), #8294ae calc(100% - 232px)) #a7c0dd;
    border-top: 1px solid #3f4c61;
    box-shadow: inset 0 1px #c3d5ea;
}

.start {
    width: 38px;
    margin-right: 27px;
}

.pin {
    width: 34px;
    margin-right: 28px;
}

.task {
    display: flex;
    justify-content: center;
    align-items: center;
    width: 60px;
    height: 39px;
    margin-right: 2px;
    background: linear-gradient(160deg, #d9e5f3, #b0c7e2 50%, #a9c2df);
    border: 1px solid #55657d;
    border-radius: 3px;
    box-shadow: inset 0 0 0 1px rgba(255, 255, 255, 0.6);
}

.pin + .task {
    margin-left: -14px;
}

.task-active {
    background: linear-gradient(160deg, #f6f9fd, #dbe7f4 60%, #d0dff0);
}

.tray {
    display: flex;
    align-items: center;
    gap: 8px;
    height: 100%;
    margin-left: auto;
    color: #fff;
}

.lang {
    padding: 0 12px 4px 0;
}

.clock {
    width: 72px;
    margin-right: -4px;
    text-align: center;
    line-height: 18px;
}

.peek {
    width: 14px;
    height: 39px;
    background: linear-gradient(#8d9bb0, #4e5f78 45%, #71829b);
    border: 1px solid #44536a;
    box-shadow: inset 0 0 0 1px #a3b0c3;
}
```
